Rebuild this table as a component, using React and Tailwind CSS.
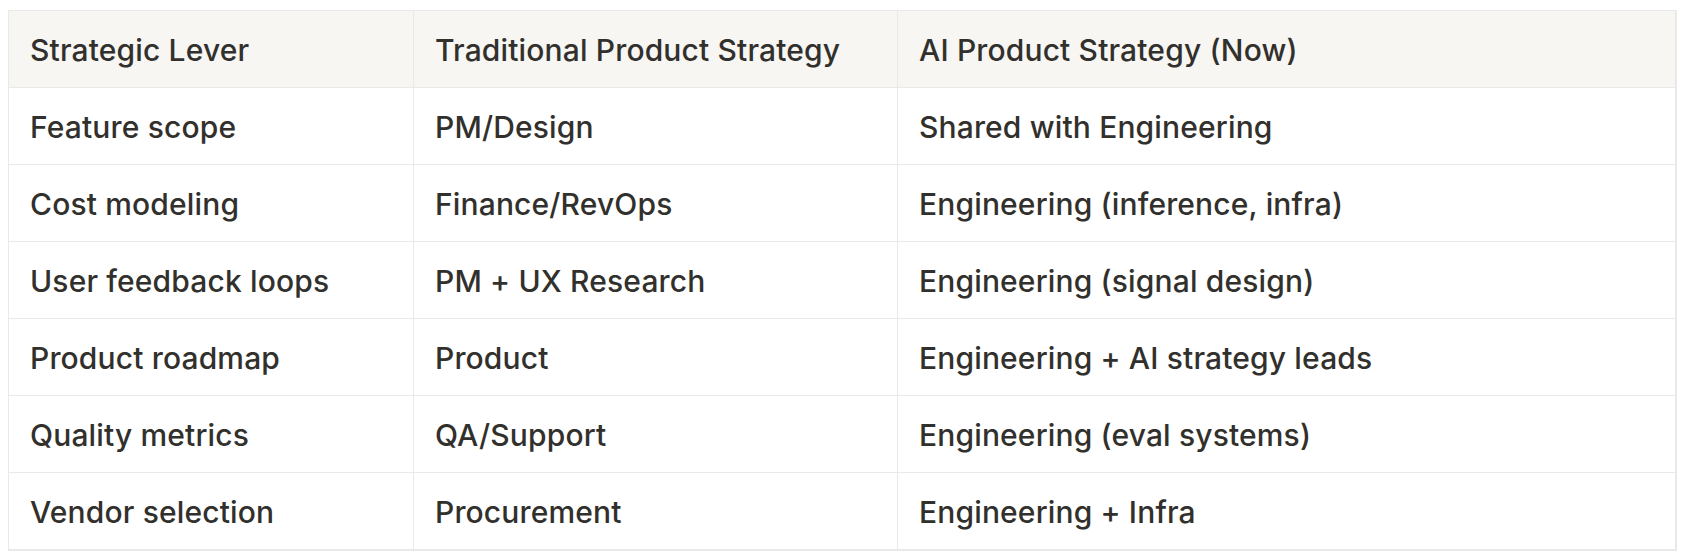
const rows = [
    ['Feature scope', 'PM/Design', 'Shared with Engineering'],
    ['Cost modeling', 'Finance/RevOps', 'Engineering (inference, infra)'],
    ['User feedback loops', 'PM + UX Research', 'Engineering (signal design)'],
    ['Product roadmap', 'Product', 'Engineering + AI strategy leads'],
    ['Quality metrics', 'QA/Support', 'Engineering (eval systems)'],
    ['Vendor selection', 'Procurement', 'Engineering + Infra'],
];

export default function App() {
    return (
        <div className="min-h-[560px] bg-white pl-[8px] pt-[10px] font-['Inter',sans-serif] text-[30px] font-[450] tracking-[0.005em] text-[#32302c]">
            <table className="w-[1669px] table-fixed border-collapse border border-r-2 border-b-2 border-[#e9e9e7]">
                <colgroup>
                    <col className="w-[405px]" />
                    <col className="w-[484px]" />
                    <col />
                </colgroup>
                <thead>
                    <tr className="h-[77px] bg-[#f7f6f3]">
                        <th className="border border-[#e9e9e7] px-[21px] pt-[3px] text-left font-[450]">Strategic Lever</th>
                        <th className="border border-[#e9e9e7] px-[21px] pt-[3px] text-left font-[450]">Traditional Product Strategy</th>
                        <th className="border border-[#e9e9e7] px-[21px] pt-[3px] text-left font-[450]">AI Product Strategy (Now)</th>
                    </tr>
                </thead>
                <tbody>
                    {rows.map((row) => (
                        <tr key={row[0]} className="h-[77px]">
                            {row.map((cell) => (
                                <td key={cell} className="border border-[#e9e9e7] px-[21px] pt-[3px]">
                                    {cell}
                                </td>
                            ))}
                        </tr>
                    ))}
                </tbody>
            </table>
        </div>
    );
}
